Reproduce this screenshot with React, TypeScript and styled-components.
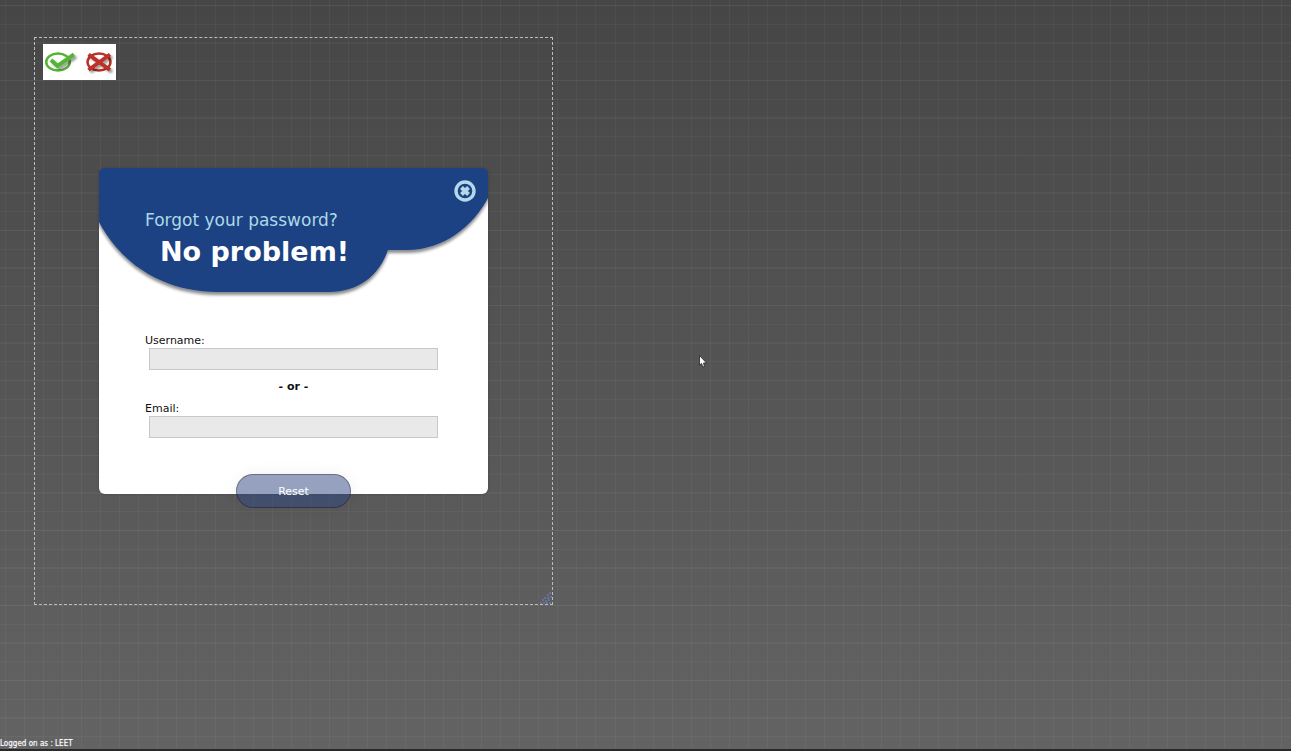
import React from 'react';
import styled, { createGlobalStyle } from 'styled-components';

const GlobalStyle = createGlobalStyle`
  * { box-sizing: border-box; }
  html, body, #root { height: 100%; }
  body { margin: 0; font-family: Verdana, 'DejaVu Sans', sans-serif; }
`;

const Page = styled.main`
  position: relative;
  display: flex;
  flex-direction: column;
  justify-content: space-between;
  min-height: 100%;
  overflow: hidden;
  border-bottom: 2px solid #2b2829;
  background-color: #555;
  background-image:
    repeating-linear-gradient(90deg, rgba(255, 255, 255, 0.04) 0 1px, transparent 1px calc(100% / 21)),
    linear-gradient(rgba(255, 255, 255, 0.03) 0 1px, transparent 1px),
    repeating-linear-gradient(rgba(255, 255, 255, 0.035) 0 1px, transparent 1px 25%),
    linear-gradient(#464646, #636363);
  background-size: 400px 100%, 100% 75px, 100% 75px, 100% 100%;
  background-position: 5px 0, 0 5px, 0 5px, 0 0;
`;

const Workspace = styled.section`
  position: relative;
  display: flex;
  flex-direction: column;
  width: 519px;
  min-height: 568px;
  margin: 37px 0 0 34px;
  padding: 6px 64px 96px 8px;
  border: 1px dashed #bdbdbd;
`;

const Marks = styled.div`
  width: 73px;
  height: 36px;
  background: #fff;
  svg { display: block; width: 100%; height: 100%; }
`;

const Card = styled.form`
  margin: 88px 0 0 56px;
  border-radius: 6px;
  background: linear-gradient(#1b4284 20px, #fff 20px);
  box-shadow: 0 0 3px rgba(0, 0, 0, 0.2);
  height: 326px;
`;

const Header = styled.header`
  position: relative;
  height: 132px;
  padding: 40px 46px 0;
  border-radius: 6px 6px 0 0;
  overflow: hidden;
`;

const Swoosh = styled.svg`
  position: absolute;
  inset: 0;
  width: 100%;
  height: 100%;
`;

const Prompt = styled.p`
  position: relative;
  margin: 0;
  font-size: 17px;
  line-height: 24px;
  color: #add8e6;
`;

const Title = styled.h1`
  position: relative;
  margin: 0 0 0 15px;
  font-size: 27px;
  line-height: 40px;
  color: #fff;
`;

const CloseButton = styled.button`
  position: absolute;
  top: 12px;
  right: 12px;
  width: 22px;
  height: 22px;
  padding: 0;
  border: 0;
  background: none;
  svg { display: block; }
`;

const Fields = styled.div`
  display: flex;
  flex-direction: column;
  padding: 33px 46px 0;
`;

const Label = styled.label`
  font-size: 11px;
  line-height: 15px;
  color: #111;
`;

const Input = styled.input`
  height: 22px;
  margin: 0 4px;
  border: 1px solid #c8c8c8;
  background: #e9e9e9;
`;

const Divider = styled.p`
  margin: 10px 0 7px;
  text-align: center;
  font-size: 11px;
  line-height: 14px;
  font-weight: bold;
  color: #111;
`;

const ResetButton = styled.button`
  display: block;
  width: 115px;
  height: 34px;
  margin: 36px auto 0;
  border: 1px solid rgba(0, 0, 0, 0.3);
  border-radius: 17px;
  background: rgba(43, 68, 128, 0.5);
  box-shadow: 0 0 16px rgba(0, 0, 0, 0.06);
  font-family: inherit;
  font-size: 11px;
  color: #fff;
`;

const Grip = styled.svg`
  position: absolute;
  right: 0;
  bottom: 0;
`;

const Status = styled.footer`
  font-family: Tahoma, 'DejaVu Sans Condensed', sans-serif;
  font-size: 8px;
  line-height: 10px;
  color: #fff;
  text-shadow: 0 0 1px rgba(255, 255, 255, 0.6);
`;

const Pointer = styled.svg`
  position: absolute;
  top: 355px;
  left: 699px;
`;

export default function App() {
  return (
    <>
      <GlobalStyle />
      <Page>
        <Workspace>
          <Marks>
            <svg viewBox="0 0 73 36" aria-hidden="true">
              <defs>
                <filter id="markShadow" x="-20%" y="-20%" width="150%" height="150%">
                  <feDropShadow dx="2" dy="2" stdDeviation="1" floodOpacity="0.4" />
                </filter>
              </defs>
              <g fill="none" stroke="#55b436">
                <ellipse cx="15" cy="18" rx="11.800" ry="8.500" strokeWidth="2.500" />
                <path d="M8 16l6.500 6L31 10.500" strokeWidth="4" filter="url(#markShadow)" />
              </g>
              <g fill="none" stroke="#bb3027">
                <ellipse cx="56" cy="18" rx="11.500" ry="8.500" strokeWidth="2.500" />
                <path d="M45.500 10.500L67 26M67 10.500L45.500 26" strokeWidth="4" filter="url(#markShadow)" />
              </g>
            </svg>
          </Marks>
          <Card onSubmit={(e) => e.preventDefault()}>
            <Header>
              <Swoosh viewBox="0 0 389 132" preserveAspectRatio="none" aria-hidden="true">
                <defs>
                  <filter id="swooshShadow" x="-10%" y="-10%" width="120%" height="120%">
                    <feDropShadow dx="0" dy="3" stdDeviation="1.500" floodOpacity="0.45" />
                  </filter>
                </defs>
                <g fill="#1b4284" filter="url(#swooshShadow)">
                  <path d="M270-10H410V0L389 30C374 58 345 82 308 82H270Z" />
                  <path d="M-20-10H289V82C280 108 259 124 230 124H118C70 124 25 101 0 54L-20 0Z" />
                </g>
              </Swoosh>
              <Prompt>Forgot your password?</Prompt>
              <Title>No problem!</Title>
              <CloseButton type="button" aria-label="Close">
                <svg width="22" height="22" viewBox="0 0 22 22" fill="none" stroke="#b3d9e8">
                  <circle cx="11" cy="11" r="9" strokeWidth="3.400" />
                  <path d="M7.500 7.500l7 7M14.500 7.500l-7 7" strokeWidth="4" />
                </svg>
              </CloseButton>
            </Header>
            <Fields>
              <Label htmlFor="username">Username:</Label>
              <Input id="username" type="text" />
              <Divider>- or -</Divider>
              <Label htmlFor="email">Email:</Label>
              <Input id="email" type="email" />
            </Fields>
            <ResetButton type="submit">Reset</ResetButton>
          </Card>
          <Grip width="12" height="12" viewBox="0 0 12 12" fill="#66729b" aria-hidden="true">
            <path d="M9 0h2v2h-2zM7 2h2v2h-2zM4 5h2v2h-2zM7 5h2v2h-2zM10 4h2v2h-2zM2 7h2v2h-2zM5 8h2v2h-2zM8 7h2v2h-2zM0 10h2v2h-2zM3 10h2v2h-2zM6 10h2v2h-2zM9 10h2v2h-2z" />
          </Grip>
        </Workspace>
        <Status>Logged on as : LEET</Status>
        <Pointer width="8" height="13" viewBox="0 0 8 13" aria-hidden="true">
          <path d="M.5.5v9.500l2-1.500 1.500 3.500 1.500-.5L4.500 8H7.500Z" fill="#fff" stroke="#222" strokeWidth=".8" />
        </Pointer>
      </Page>
    </>
  );
}
